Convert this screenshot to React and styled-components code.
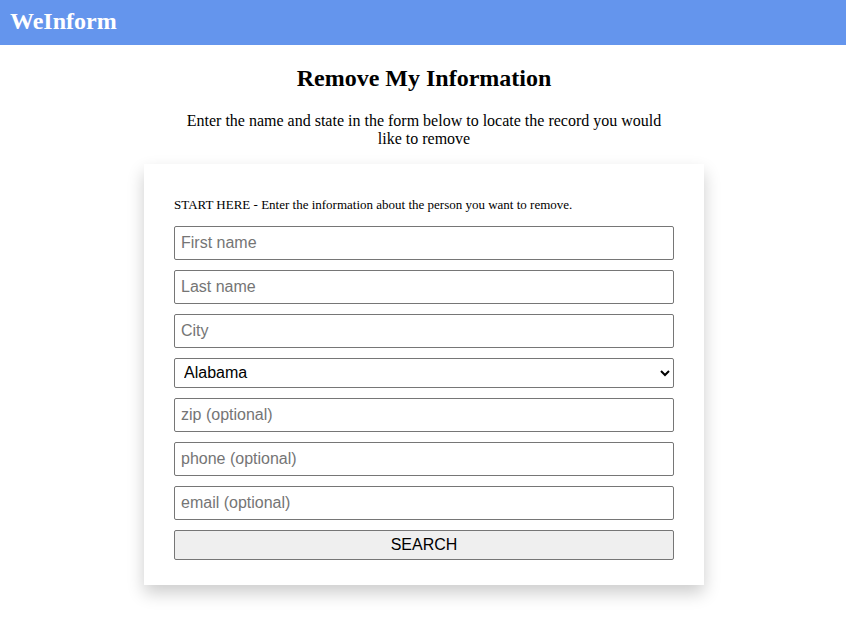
import React from "react";
import styled, { createGlobalStyle } from "styled-components";

const Global = createGlobalStyle`
  html, body { margin: 0; padding: 0; background: #fff; }
  body { font-family: "Liberation Serif", "Times New Roman", serif; color: #000; }
`;

const Header = styled.header`
  height: 45px;
  background: #6495ed;
  display: flex;
  align-items: center;
  padding: 0 10px;
  box-sizing: border-box;
`;

const Brand = styled.h1`
  margin: 0;
  font-size: 24px;
  font-weight: bold;
  color: #fff;
  line-height: 1;
  padding-bottom: 4px;
`;

const Main = styled.main`
  display: flex;
  flex-direction: column;
  align-items: center;
  padding: 0 0 60px 2px;
`;

const Title = styled.h2`
  margin: 19px 0 0;
  font-size: 24px;
  line-height: 28px;
  font-weight: bold;
`;

const Intro = styled.p`
  margin: 20px 0 0;
  width: 480px;
  text-align: center;
  font-size: 16px;
  line-height: 18px;
`;

const Card = styled.form`
  margin-top: 16px;
  width: 560px;
  box-sizing: border-box;
  padding: 33px 30px 25px;
  background: #fff;
  box-shadow: 0 8px 16px 0 rgba(0, 0, 0, 0.2);
  display: flex;
  flex-direction: column;
  gap: 10px;
`;

const Lead = styled.div`
  font-size: 13px;
  line-height: 15px;
  margin-bottom: 4px;
`;

const Field = styled.input`
  height: 34px;
  box-sizing: border-box;
  border: 1px solid #767676;
  border-radius: 2px;
  padding: 0 6px;
  font-family: "Liberation Sans", Arial, sans-serif;
  font-size: 16px;
  color: #000;
  &::placeholder { color: #757575; }
`;

const StateSelect = styled.select`
  height: 30px;
  box-sizing: border-box;
  border: 1px solid #767676;
  border-radius: 2px;
  padding: 0 5px 1px;
  font-family: "Liberation Sans", Arial, sans-serif;
  font-size: 16px;
  color: #000;
  background: #fff;
`;

const SearchButton = styled.button`
  height: 30px;
  box-sizing: border-box;
  border: 1px solid #767676;
  border-radius: 2px;
  background: #efefef;
  font-family: "Liberation Sans", Arial, sans-serif;
  font-size: 16px;
  color: #000;
`;

const states = ["Alabama", "Alaska", "Arizona", "Arkansas", "California"];

export default function App() {
  return (
    <>
      <Global />
      <Header>
        <Brand>WeInform</Brand>
      </Header>
      <Main>
        <Title>Remove My Information</Title>
        <Intro>
          Enter the name and state in the form below to locate the record you would like to remove
        </Intro>
        <Card onSubmit={(e) => e.preventDefault()}>
          <Lead>START HERE - Enter the information about the person you want to remove.</Lead>
          <Field placeholder="First name" />
          <Field placeholder="Last name" />
          <Field placeholder="City" />
          <StateSelect defaultValue="Alabama">
            {states.map((s) => (
              <option key={s}>{s}</option>
            ))}
          </StateSelect>
          <Field placeholder="zip (optional)" />
          <Field placeholder="phone (optional)" />
          <Field placeholder="email (optional)" />
          <SearchButton type="submit">SEARCH</SearchButton>
        </Card>
      </Main>
    </>
  );
}
